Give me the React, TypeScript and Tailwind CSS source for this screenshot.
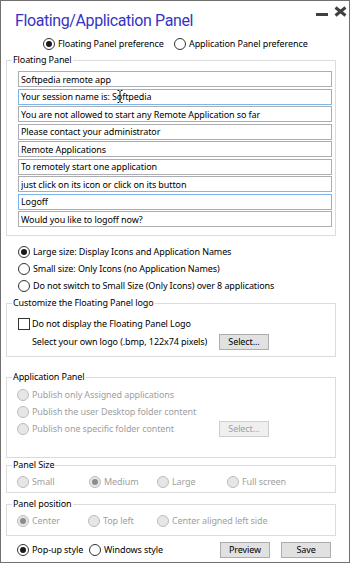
import { ReactNode } from 'react'

const Radio = ({ checked = false, disabled = false }: { checked?: boolean; disabled?: boolean }) => (
  <span
    className={`flex h-[12px] w-[12px] shrink-0 items-center justify-center rounded-full border ${
      disabled ? 'border-[#bcbcbc] bg-[#e6e6e6]' : 'border-[#333333] bg-white'
    }`}
  >
    {checked && (
      <span className={`h-[6px] w-[6px] rounded-full ${disabled ? 'bg-[#8c8c8c]' : 'bg-[#1a1a1a]'}`} />
    )}
  </span>
)

function Option({
  label,
  checked,
  disabled,
  className = ''
}: {
  label: string
  checked?: boolean
  disabled?: boolean
  className?: string
}) {
  return (
    <label className={`flex shrink-0 items-center gap-[3px] ${disabled ? 'text-[#a0a0a0]' : ''} ${className}`}>
      <Radio checked={checked} disabled={disabled} />
      <span className="whitespace-nowrap">{label}</span>
    </label>
  )
}

function WinButton({ children, disabled = false }: { children: ReactNode; disabled?: boolean }) {
  return (
    <button
      className={`flex h-[16px] w-[50px] shrink-0 items-center justify-center border ${
        disabled ? 'border-[#cfcfcf] bg-[#efefef] text-[#a0a0a0]' : 'border-[#adadad] bg-[#e1e1e1]'
      }`}
    >
      {children}
    </button>
  )
}

function GroupBox({ title, className = '', children }: { title: string; className?: string; children: ReactNode }) {
  return (
    <fieldset className={`ml-[5px] w-[330px] border border-[#dcdcdc] ${className}`}>
      <legend className="ml-[5px] px-[1px] leading-[14px]">{title}</legend>
      {children}
    </fieldset>
  )
}

const messages = [
  { text: 'Softpedia remote app' },
  { text: 'Your session name is: Softpedia', focus: true, cursor: true },
  { text: 'You are not allowed to start any Remote Application so far' },
  { text: 'Please contact your administrator' },
  { text: 'Remote Applications' },
  { text: 'To remotely start one application' },
  { text: 'just click on its icon or click on its button' },
  { text: 'Logoff', focus: true },
  { text: 'Would you like to logoff now?' }
]

export default function App() {
  return (
    <div className="flex h-[563px] w-[350px] flex-col overflow-hidden border border-[#707070] bg-white font-['Noto_Sans',sans-serif] text-[9px] leading-[14px] tracking-[-0.1px] text-black">
      {/* title bar */}
      <div className="flex h-[32px] items-start">
        <h1 className="ml-[14px] mt-[9px] font-['Roboto',sans-serif] text-[16px] leading-[22px] tracking-[-0.4px] text-[#3535c4]">
          Floating/Application Panel
        </h1>
        <div className="ml-auto mr-[2px] mt-[5px]">
          <svg width="31" height="11" viewBox="0 0 31 11">
            <rect x="0" y="7" width="12" height="3" fill="#404040" />
            <path d="M19.5 1.5 L29.5 9.5 M29.5 1.5 L19.5 9.5" stroke="#404040" strokeWidth="3" />
          </svg>
        </div>
      </div>

      <div className="mt-[4px] flex h-[14px] items-center pl-[42px]">
        <Option label="Floating Panel preference" checked className="w-[131px]" />
        <Option label="Application Panel preference" />
      </div>

      <GroupBox title="Floating Panel" className="mt-[2px]">
        <div className="flex flex-col gap-[1.5px] pb-[8px] pl-[11px] pr-[3px] pt-[4px]">
          {messages.map((m) => (
            <div key={m.text} className="relative">
              <input
                readOnly
                value={m.text}
                className={`block h-[16px] w-full border px-[2px] outline-none ${
                  m.focus ? 'border-[#7eb4ea]' : 'border-[#abadb3]'
                }`}
              />
              {m.cursor && (
                // mouse I-beam pointer resting over the text
                <svg className="absolute left-[99px] top-[1px]" width="6" height="13" viewBox="0 0 6 13">
                  <path d="M0.5 0.5 H2 L3 1.5 L4 0.5 H5.5 M3 1.5 V11.5 M0.5 12.5 H2 L3 11.5 L4 12.5 H5.5" fill="none" stroke="#111" strokeWidth="1" />
                </svg>
              )}
            </div>
          ))}
        </div>
      </GroupBox>

      <div className="mt-[7px] flex flex-col pl-[17px]">
        <div className="flex h-[17px] items-center">
          <Option label="Large size: Display Icons and Application Names" checked />
        </div>
        <div className="flex h-[17px] items-center">
          <Option label="Small size: Only Icons (no Application Names)" />
        </div>
        <div className="flex h-[17px] items-center">
          <Option label="Do not switch to Small Size (Only Icons) over 8 applications" />
        </div>
      </div>

      <GroupBox title="Customize the Floating Panel logo" className="mt-[2px]">
        <div className="flex flex-col gap-[2px] pb-[7px] pt-[6px]">
          <label className="flex h-[16px] items-center gap-[2px] pl-[11px]">
            <span className="h-[12px] w-[12px] shrink-0 border border-[#333333] bg-white" />
            <span>Do not display the Floating Panel Logo</span>
          </label>
          <div className="flex h-[15px] items-center pl-[25px]">
            <span className="w-[187px] whitespace-nowrap">Select your own logo (.bmp, 122x74 pixels)</span>
            <WinButton>Select...</WinButton>
          </div>
        </div>
      </GroupBox>

      <GroupBox title="Application Panel" className="mt-[13px]">
        <div className="flex flex-col pb-[20px] pl-[10px] pt-[2px]">
          <div className="flex h-[17px] items-center">
            <Option label="Publish only Assigned applications" disabled />
          </div>
          <div className="flex h-[17px] items-center">
            <Option label="Publish the user Desktop folder content" disabled />
          </div>
          <div className="flex h-[17px] items-center">
            <Option label="Publish one specific folder content" disabled className="w-[202px]" />
            <WinButton disabled>Select...</WinButton>
          </div>
        </div>
      </GroupBox>

      <GroupBox title="Panel Size">
        <div className="mb-[2px] mt-[1px] flex h-[17px] items-center pl-[10px]">
          <Option label="Small" disabled className="w-[72px]" />
          <Option label="Medium" checked disabled className="w-[68px]" />
          <Option label="Large" disabled className="w-[70px]" />
          <Option label="Full screen" disabled />
        </div>
      </GroupBox>

      <GroupBox title="Panel position" className="mt-[4px]">
        <div className="mb-[6px] mt-[1px] flex h-[17px] items-center pl-[10px]">
          <Option label="Center" checked disabled className="w-[71px]" />
          <Option label="Top left" disabled className="w-[69px]" />
          <Option label="Center aligned left side" disabled />
        </div>
      </GroupBox>

      <div className="mt-[6px] flex h-[16px] items-center pl-[16px] pr-[18px]">
        <Option label="Pop-up style" checked className="w-[72px]" />
        <Option label="Windows style" />
        <div className="ml-auto flex gap-[11px]">
          <WinButton>Preview</WinButton>
          <WinButton>Save</WinButton>
        </div>
      </div>
    </div>
  )
}
